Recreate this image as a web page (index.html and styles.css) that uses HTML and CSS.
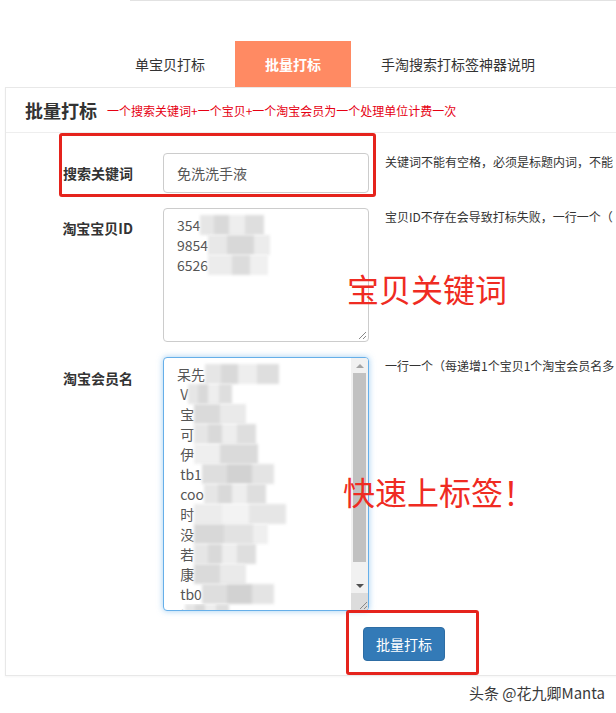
FILE: index.html
```html
<!DOCTYPE html>
<html>
<head>
  <title>批量打标</title>
  <link rel="stylesheet" href="styles.css">
</head>
<body>
<div class="page">
  <div class="topline"></div>

  <ul class="tabs">
    <li>单宝贝打标</li>
    <li class="active">批量打标</li>
    <li>手淘搜索打标签神器说明</li>
  </ul>

  <div class="panel">
    <div class="panel-head">
      <h2>批量打标</h2>
      <span class="tip">一个搜索关键词+一个宝贝+一个淘宝会员为一个处理单位计费一次</span>
    </div>

    <div class="panel-body">
      <div class="form-row row-keyword">
        <label>搜索关键词</label>
        <div class="input">免洗洗手液</div>
        <p class="help">关键词不能有空格，必须是标题内词，不能</p>
      </div>

      <div class="form-row row-ids">
        <label>淘宝宝贝ID</label>
        <div class="textarea">
          <div class="lines">
            <div>354<span class="mosaic w1"></span></div>
            <div>9854<span class="mosaic w2"></span></div>
            <div>6526<span class="mosaic w3"></span></div>
          </div>
          <span class="grip"><svg width="9" height="9" viewBox="0 0 9 9"><path d="M8 1 L1 8 M8 5 L5 8" stroke="#888" stroke-width="1"/></svg></span>
        </div>
        <p class="help">宝贝ID不存在会导致打标失败，一行一个（</p>
      </div>

      <div class="form-row row-members">
        <label>淘宝会员名</label>
        <div class="textarea focus">
          <div class="lines">
            <div>呆先<span class="mosaic m1"></span></div>
            <div> V<span class="mosaic m2"></span></div>
            <div> 宝<span class="mosaic m3"></span></div>
            <div> 可<span class="mosaic m4"></span></div>
            <div> 伊<span class="mosaic m5"></span></div>
            <div> tb1<span class="mosaic m6"></span></div>
            <div> coo<span class="mosaic m7"></span></div>
            <div> 时<span class="mosaic m8"></span></div>
            <div> 没<span class="mosaic m9"></span></div>
            <div> 若<span class="mosaic m4"></span></div>
            <div> 康<span class="mosaic m3"></span></div>
            <div> tb0<span class="mosaic m6"></span></div>
            <div class="cut"> t<span class="mosaic m2"></span></div>
          </div>
          <div class="scrollbar">
            <span class="arrow up"></span>
            <span class="track"><span class="thumb"></span></span>
            <span class="arrow down"></span>
            <span class="corner"><svg width="9" height="9" viewBox="0 0 9 9"><path d="M8 1 L1 8 M8 5 L5 8" stroke="#888" stroke-width="1"/></svg></span>
          </div>
        </div>
        <p class="help">一行一个（每递增1个宝贝1个淘宝会员名多</p>
      </div>

      <div class="btn-row">
        <button class="btn">批量打标</button>
      </div>
    </div>
  </div>

  <div class="watermark">头条 @花九卿Manta</div>

  <!-- annotations drawn on top of the screenshot -->
  <div class="mark mark-keyword"></div>
  <div class="mark mark-button"></div>
  <div class="note note-1">宝贝关键词</div>
  <div class="note note-2">快速上标签！</div>
</div>
</body>
</html>
```

FILE: styles.css
```css
html, body {
  margin: 0;
  overflow: hidden;
}

body {
  font-family: "Noto Sans CJK SC", "Noto Sans", sans-serif;
  font-size: 14px;
  color: #333;
  background: #fff;
}

.page {
  position: relative;
  width: 616px;
  height: 713px;
}

.topline {
  margin-left: 130px;
  height: 1px;
  background: #e2e2e2;
}

.tabs {
  list-style: none;
  margin: 40px 0 0;
  padding: 0 0 0 105px;
  display: flex;
  height: 46px;
}

.tabs li {
  padding: 0 30px;
  line-height: 46px;
  color: #333;
  white-space: nowrap;
}

.tabs li.active {
  background: #ff8a63;
  color: #fff;
  font-weight: bold;
}

.panel {
  margin-left: 5px;
  width: 660px;
  border: 1px solid #e8e8e8;
  box-shadow: 0 1px 2px rgba(0, 0, 0, 0.04);
}

.panel-head {
  display: flex;
  align-items: center;
  height: 44px;
  padding: 0 19px;
  border-bottom: 1px solid #eee;
}

.panel-head h2 {
  margin: 0;
  font-size: 18px;
  font-weight: bold;
  color: #333;
}

.panel-head .tip {
  margin-left: 10px;
  font-size: 12px;
  color: #e60012;
}

.panel-body {
  padding: 20px 0 14px;
}

.form-row {
  display: flex;
  align-items: flex-start;
  margin-bottom: 15px;
}

.form-row label {
  flex-shrink: 0;
  width: 127px;
  text-align: right;
  font-weight: bold;
  line-height: 20px;
  padding-top: 10px;
  color: #333;
}

.row-members {
  margin-bottom: 16px;
}

.row-members label {
  padding-top: 11px;
}

.input,
.textarea {
  flex-shrink: 0;
  margin-left: 30px;
  width: 206px;
  box-sizing: border-box;
  border: 1px solid #ccc;
  border-radius: 4px;
  color: #555;
  background: #fff;
}

.input {
  height: 40px;
  line-height: 38px;
  padding: 0 13px;
}

.textarea {
  position: relative;
  display: flex;
  line-height: 20px;
}

.row-ids .textarea {
  height: 134px;
}

.row-members .textarea {
  height: 254px;
  overflow: hidden;
}

.textarea.focus {
  border-color: #66afe9;
  box-shadow: 0 0 6px rgba(102, 175, 233, 0.6);
}

.lines {
  flex: 1;
  padding: 6px 0 0 13px;
  overflow: hidden;
}

.lines div {
  height: 20px;
  white-space: pre;
}

.lines div.cut {
  height: 8px;
  overflow: hidden;
}

.mosaic {
  display: inline-block;
  height: 20px;
  vertical-align: top;
  filter: blur(1.5px);
  background: linear-gradient(90deg, #e6e6e6 0 22%, #d9d9d9 22% 45%, #eeeeee 45% 70%, #dedede 70% 100%);
}

.w1 { width: 64px; }
.w2 { width: 62px; background: linear-gradient(90deg, #e8e8e8 0 30%, #d8d8d8 30% 75%, #ececec 75%); }
.w3 { width: 60px; background: linear-gradient(90deg, #ececec 0 40%, #dcdcdc 40% 70%, #f0f0f0 70%); }

.m1 { width: 74px; }
.m2 { width: 44px; }
.m3 { width: 52px; background: linear-gradient(90deg, #dadada 0 50%, #eaeaea 50%); }
.m4 { width: 62px; }
.m5 { width: 64px; background: linear-gradient(90deg, #efefef 0 40%, #dadada 40%); }
.m6 { width: 72px; background: linear-gradient(90deg, #dedede 0 35%, #d2d2d2 35% 70%, #e4e4e4 70%); }
.m7 { width: 62px; }
.m8 { width: 92px; background: linear-gradient(90deg, #ececec 0 30%, #f3f3f3 30% 60%, #e6e6e6 60%); }
.m9 { width: 74px; background: linear-gradient(90deg, #d8d8d8 0 40%, #e2e2e2 40% 80%, #efefef 80%); }

.grip {
  position: absolute;
  right: 1px;
  bottom: 1px;
  line-height: 0;
}

.scrollbar {
  flex-shrink: 0;
  width: 17px;
  display: flex;
  flex-direction: column;
  background: #f1f1f1;
}

.scrollbar .arrow {
  height: 15px;
  display: flex;
  align-items: center;
  justify-content: center;
}

.scrollbar .arrow::before {
  content: "";
  border-left: 4px solid transparent;
  border-right: 4px solid transparent;
}

.scrollbar .up::before {
  border-bottom: 4px solid #a3a3a3;
}

.scrollbar .down::before {
  border-top: 4px solid #505050;
}

.scrollbar .track {
  flex: 1;
  padding: 0 2px;
}

.scrollbar .thumb {
  display: block;
  height: 189px;
  background: #c1c1c1;
}

.scrollbar .corner {
  height: 17px;
  background: #dcdcdc;
  display: flex;
  align-items: flex-end;
  justify-content: flex-end;
  line-height: 0;
}

.help {
  margin: 0 0 0 16px;
  font-size: 12px;
  line-height: 17px;
  white-space: nowrap;
  color: #333;
}

.btn-row {
  padding-left: 357px;
}

.btn {
  font-family: inherit;
  font-size: 14px;
  line-height: 20px;
  padding: 6px 12px;
  border: 1px solid #2e6da4;
  border-radius: 4px;
  background: #337ab7;
  color: #fff;
}

.watermark {
  margin-top: 6px;
  padding-right: 11px;
  text-align: right;
  font-size: 15px;
  color: #3a3a3a;
  text-shadow: 0 0 2px #fff;
}

.mark {
  position: absolute;
  border: 3px solid #e5231c;
  border-radius: 3px;
}

.mark-keyword {
  left: 59px;
  top: 133px;
  width: 311px;
  height: 58px;
}

.mark-button {
  left: 346px;
  top: 610px;
  width: 127px;
  height: 59px;
}

.note {
  position: absolute;
  font-size: 32px;
  line-height: 36px;
  color: #ef2b22;
  white-space: nowrap;
}

.note-1 {
  left: 347px;
  top: 270px;
}

.note-2 {
  left: 343px;
  top: 473px;
}
```
